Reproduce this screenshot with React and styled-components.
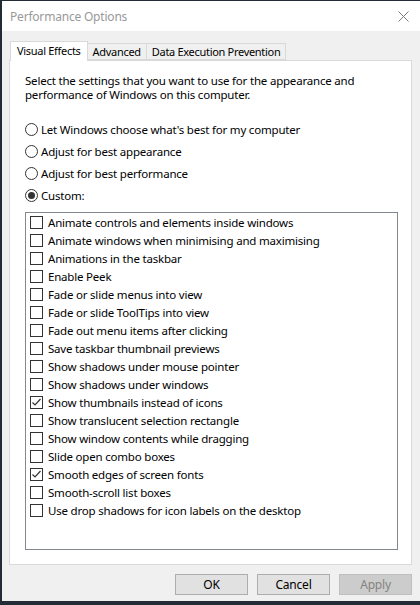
import React from "react"
import styled, { createGlobalStyle } from "styled-components"

const GlobalStyle = createGlobalStyle`
  html, body {
    margin: 0;
    padding: 0;
    background: #232b36;
  }
  body {
    font-family: "Noto Sans", "Open Sans", sans-serif;
    font-size: 11.5px;
    letter-spacing: -0.2px;
    color: #000;
  }
`

const effects = [
  { label: "Animate controls and elements inside windows", checked: false },
  { label: "Animate windows when minimising and maximising", checked: false },
  { label: "Animations in the taskbar", checked: false },
  { label: "Enable Peek", checked: false },
  { label: "Fade or slide menus into view", checked: false },
  { label: "Fade or slide ToolTips into view", checked: false },
  { label: "Fade out menu items after clicking", checked: false },
  { label: "Save taskbar thumbnail previews", checked: false },
  { label: "Show shadows under mouse pointer", checked: false },
  { label: "Show shadows under windows", checked: false },
  { label: "Show thumbnails instead of icons", checked: true },
  { label: "Show translucent selection rectangle", checked: false },
  { label: "Show window contents while dragging", checked: false },
  { label: "Slide open combo boxes", checked: false },
  { label: "Smooth edges of screen fonts", checked: true },
  { label: "Smooth-scroll list boxes", checked: false },
  { label: "Use drop shadows for icon labels on the desktop", checked: false },
]

const modes = [
  { label: "Let Windows choose what's best for my computer", selected: false },
  { label: "Adjust for best appearance", selected: false },
  { label: "Adjust for best performance", selected: false },
  { label: "Custom:", selected: true },
]

const tabs = ["Visual Effects", "Advanced", "Data Execution Prevention"]

const CloseIcon = () => (
  <svg width="11" height="11" viewBox="0 0 11 11">
    <path d="M0.5 0.5 L10.5 10.5 M10.5 0.5 L0.5 10.5" stroke="#7a7a7a" strokeWidth="1" fill="none" />
  </svg>
)

const CheckMark = () => (
  <svg width="11" height="11" viewBox="0 0 11 11">
    <path d="M1.5 5.5 L4 8 L9.5 2" stroke="#333" strokeWidth="1.2" fill="none" />
  </svg>
)

const App = () => {
  return (
    <>
      <GlobalStyle />
      <Window>
        <TitleBar>
          <span>Performance Options</span>
          <CloseButton>
            <CloseIcon />
          </CloseButton>
        </TitleBar>
        <Body>
          <TabRow>
            {tabs.map((tab, index) => (
              <Tab key={tab} active={index === 0}>
                {tab}
              </Tab>
            ))}
          </TabRow>
          <Panel>
            <Intro>
              Select the settings that you want to use for the appearance and
              performance of Windows on this computer.
            </Intro>
            <RadioGroup>
              {modes.map((mode) => (
                <RadioRow key={mode.label}>
                  <Radio selected={mode.selected} />
                  <span>{mode.label}</span>
                </RadioRow>
              ))}
            </RadioGroup>
            <ListBox>
              {effects.map((item) => (
                <CheckRow key={item.label}>
                  <Box>{item.checked && <CheckMark />}</Box>
                  <span>{item.label}</span>
                </CheckRow>
              ))}
            </ListBox>
          </Panel>
          <ButtonRow>
            <Button>OK</Button>
            <Button>Cancel</Button>
            <Button disabled>Apply</Button>
          </ButtonRow>
        </Body>
      </Window>
    </>
  )
}

const Window = styled.div`
  margin: 1px 0 0 2px;
  width: 418px;
  height: 600px;
  background: #f0f0f0;
  display: flex;
  flex-direction: column;
`

const TitleBar = styled.div`
  height: 30px;
  flex-shrink: 0;
  background: #fff;
  display: flex;
  align-items: center;
  justify-content: space-between;
  padding: 0 0 0 8px;
  color: #999;
  font-size: 12px;
`

const CloseButton = styled.div`
  width: 34px;
  height: 30px;
  display: flex;
  align-items: center;
  justify-content: center;
`

const Body = styled.div`
  flex: 1;
  display: flex;
  flex-direction: column;
  padding: 10px 8px 6px 7px;
  min-height: 0;
`

const TabRow = styled.div`
  display: flex;
  align-items: flex-end;
  height: 19px;
  padding-left: 1px;
  position: relative;
  z-index: 1;
`

const Tab = styled.div`
  height: ${(p) => (p.active ? "20px" : "17px")};
  margin-bottom: ${(p) => (p.active ? "-1px" : "0")};
  margin-left: ${(p) => (p.active ? "0" : "-1px")};
  padding: 0 ${(p) => (p.active ? "6px" : "5px")};
  padding-bottom: ${(p) => (p.active ? "2px" : "0")};
  box-sizing: border-box;
  border: 1px solid #d9d9d9;
  border-bottom: ${(p) => (p.active ? "none" : "1px solid #d9d9d9")};
  background: ${(p) => (p.active ? "#fff" : "#f0f0f0")};
  display: flex;
  align-items: center;
  white-space: nowrap;
  font-size: 11px;
  letter-spacing: -0.3px;
`

const Panel = styled.div`
  flex: 1;
  min-height: 0;
  background: #fff;
  border: 1px solid #d9d9d9;
  display: flex;
  flex-direction: column;
  padding: 13px 13px 14px 15px;
`

const Intro = styled.p`
  margin: 0;
  line-height: 14px;
`

const RadioGroup = styled.div`
  display: flex;
  flex-direction: column;
  margin-top: 16px;
`

const RadioRow = styled.div`
  height: 22px;
  display: flex;
  align-items: center;
  gap: 3px;
  white-space: nowrap;
`

const Radio = styled.div`
  width: 13px;
  height: 13px;
  box-sizing: border-box;
  border: 1px solid #333;
  border-radius: 50%;
  display: flex;
  align-items: center;
  justify-content: center;

  &::after {
    content: "";
    display: ${(p) => (p.selected ? "block" : "none")};
    width: 7px;
    height: 7px;
    border-radius: 50%;
    background: #333;
  }
`

const ListBox = styled.div`
  flex: 1;
  margin-top: 6px;
  border: 1px solid #828790;
  padding: 0 0 0 4px;
  display: flex;
  flex-direction: column;
`

const CheckRow = styled.div`
  height: 18px;
  display: flex;
  align-items: center;
  gap: 5px;
  white-space: nowrap;
`

const Box = styled.div`
  width: 13px;
  height: 13px;
  box-sizing: border-box;
  border: 1px solid #333;
  display: flex;
  align-items: center;
  justify-content: center;
`

const ButtonRow = styled.div`
  display: flex;
  justify-content: flex-end;
  gap: 9px;
  margin-top: 9px;
`

const Button = styled.button`
  width: 73px;
  height: 21px;
  box-sizing: border-box;
  font-family: inherit;
  font-size: 12px;
  letter-spacing: -0.2px;
  padding: 0;
  background: ${(p) => (p.disabled ? "#cccccc" : "#e1e1e1")};
  border: 1px solid ${(p) => (p.disabled ? "#bfbfbf" : "#adadad")};
  color: ${(p) => (p.disabled ? "#838383" : "#000")};
  border-radius: 0;
`

export default App
